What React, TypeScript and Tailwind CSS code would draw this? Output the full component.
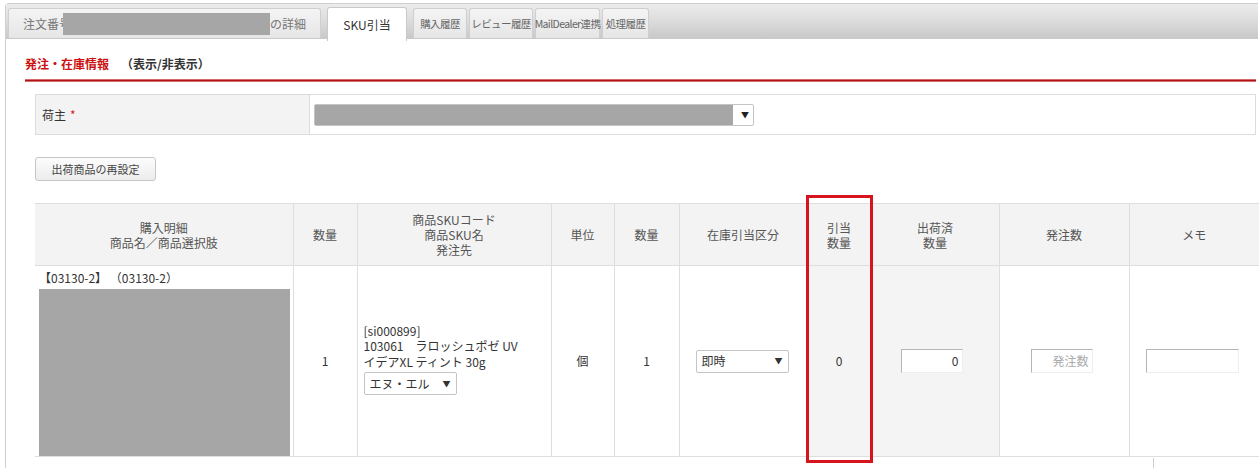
import React from "react";

const font = { fontFamily: '"Noto Sans CJK JP", "Noto Sans", sans-serif' };

function Tab({ children, active, w }: { children: React.ReactNode; active?: boolean; w: string }) {
  if (active) {
    return (
      <div className={`${w} h-[34px] -mb-[3px] flex items-center justify-center whitespace-nowrap rounded-t-[3px] border border-b-0 border-[#c9c9c9] bg-white text-[12px] text-[#333]`}>
        {children}
      </div>
    );
  }
  return (
    <div className={`${w} h-[30px] flex items-center justify-center whitespace-nowrap rounded-t-[3px] border border-b-0 border-[#cfcfcf] bg-gradient-to-b from-[#f4f4f4] to-[#e6e6e6] text-[10.5px] tracking-[-0.6px] text-[#666]`}>
      {children}
    </div>
  );
}

function Th({ children, w, last }: { children: React.ReactNode; w: string; last?: boolean }) {
  return (
    <th className={`${w} h-[62px] border-r ${last ? "border-r-0" : ""} border-b border-[#dedede] bg-[#f3f3f3] text-[12px] font-normal leading-[15px] text-[#555] text-center align-middle`}>
      {children}
    </th>
  );
}

export default function App() {
  return (
    <div className="relative w-[1260px] h-[468px] overflow-hidden bg-white text-[#333]" style={font}>
      <div className="ml-[5px] mt-[3px] w-[1253px] h-[470px] border-l border-t border-[#cfcfcf] rounded-tl-[4px]">
        {/* tab bar */}
        <div className="h-[35px] flex items-end gap-[6px] pl-[2px] bg-gradient-to-b from-[#ececec] via-[#dcdcdc] to-[#c9c9c9] border-b border-[#c9c9c9]">
          <Tab w="w-[313px]">
            <span className="flex items-center w-full pl-[14px] text-[12px] tracking-normal">
              <span className="text-[#777]">注文番号</span>
              <span className="-ml-[8px] inline-block w-[207px] h-[22px] bg-[#a6a6a6]" />
              <span className="text-[#777]">の詳細</span>
            </span>
          </Tab>
          <Tab active w="w-[80px]">SKU引当</Tab>
          <div className="flex items-end gap-[2px]">
            <Tab w="w-[54px]">購入履歴</Tab>
            <Tab w="w-[64px]">レビュー履歴</Tab>
            <Tab w="w-[65px]">MailDealer連携</Tab>
            <Tab w="w-[47px]">処理履歴</Tab>
          </div>
        </div>

        {/* content */}
        <div className="pl-[19px]">
          <div className="pt-[16px] h-[33px] flex items-center text-[12px] font-bold leading-[16px]">
            <span className="text-[#cc1111]">発注・在庫情報</span>
            <span className="ml-[12px] text-[#333]">（表示/非表示）</span>
          </div>
          <div className="mt-[7px] h-[3px] w-[1231px] bg-[#b0141a] border-y border-[#d46a6a]" />

          <div className="ml-[10px] mt-[12px] w-[1221px] h-[41px] flex border border-[#dcdcdc]">
            <div className="w-[274px] bg-[#f3f3f3] border-r border-[#dcdcdc] flex items-center pl-[6px] text-[12px]">
              荷主 <span className="ml-[4px] text-[#e02020]">*</span>
            </div>
            <div className="flex items-center pl-[4px]">
              <div className="w-[440px] h-[22px] flex items-center border border-[#c4c4c4] rounded-[2px] bg-white">
                <span className="w-[418px] h-full bg-[#a6a6a6]" />
                <span className="ml-[8px] text-[8px] text-[#222]">▼</span>
              </div>
            </div>
          </div>

          <button className="ml-[10px] mt-[22px] h-[24px] w-[121px] rounded-[3px] border border-[#c6c6c6] bg-gradient-to-b from-[#fcfcfc] to-[#ececec] text-[11px] text-[#444]">
            出荷商品の再設定
          </button>

          <table className="ml-[10px] mt-[22px] w-[1224px] table-fixed border-collapse border-t border-[#dedede]">
            <thead>
              <tr>
                <Th w="w-[258px]">購入明細<br />商品名／商品選択肢</Th>
                <Th w="w-[64px]">数量</Th>
                <Th w="w-[194px]">商品SKUコード<br />商品SKU名<br />発注先</Th>
                <Th w="w-[63px]">単位</Th>
                <Th w="w-[65px]">数量</Th>
                <Th w="w-[128px]">在庫引当区分</Th>
                <Th w="w-[64px]">引当<br />数量</Th>
                <Th w="w-[128px]">出荷済<br />数量</Th>
                <Th w="w-[130px]">発注数</Th>
                <Th w="w-[130px]" last>メモ</Th>
              </tr>
            </thead>
            <tbody className="text-[12px]">
              <tr className="h-[191px]">
                <td className="border-r border-b border-[#dedede] bg-white align-top px-[4px] pt-[4px]">
                  <div className="leading-[16px] text-[#333]">【03130-2】 （03130-2）</div>
                  <div className="mt-[3px] w-[251px] h-[167px] bg-[#a6a6a6]" />
                </td>
                <td className="border-r border-b border-[#dedede] bg-white text-center">1</td>
                <td className="border-r border-b border-[#dedede] bg-white px-[6px] leading-[15.5px]">
                  <div className="-mt-[4px]">[si000899]</div>
                  <div>103061　ラロッシュポゼ UV</div>
                  <div>イデアXL ティント 30g</div>
                  <div className="mt-[3px] w-[93px] h-[23px] flex items-center justify-between px-[5px] border border-[#c4c4c4] rounded-[2px]">
                    <span>エヌ・エル</span>
                    <span className="text-[8px]">▼</span>
                  </div>
                </td>
                <td className="border-r border-b border-[#dedede] bg-white text-center">個</td>
                <td className="border-r border-b border-[#dedede] bg-white text-center">1</td>
                <td className="border-r border-b border-[#dedede] bg-white pl-[16px]">
                  <div className="w-[93px] h-[23px] flex items-center justify-between px-[5px] border border-[#c4c4c4] rounded-[2px]">
                    <span>即時</span>
                    <span className="text-[8px]">▼</span>
                  </div>
                </td>
                <td className="border-r border-b border-[#dedede] bg-[#f4f4f4] text-center">0</td>
                <td className="border-r border-b border-[#dedede] bg-[#f4f4f4] pl-[29px]">
                  <div className="w-[62px] h-[24px] flex items-center justify-end pr-[3px] bg-white border border-[#b5b5b5] border-r-[#eeeeee] border-b-[#eeeeee]">0</div>
                </td>
                <td className="border-r border-b border-[#dedede] bg-white pl-[31px]">
                  <div className="w-[62px] h-[24px] flex items-center justify-end pr-[3px] bg-white border border-[#b5b5b5] border-r-[#eeeeee] border-b-[#eeeeee] text-[#aaa]">発注数</div>
                </td>
                <td className="border-b border-[#dedede] bg-white pl-[16px]">
                  <div className="w-[93px] h-[24px] bg-white border border-[#b5b5b5] border-r-[#eeeeee] border-b-[#eeeeee]" />
                </td>
              </tr>
            </tbody>
          </table>
        </div>
      </div>

      {/* annotation box */}
      <div className="absolute left-[806px] top-[195px] w-[67px] h-[268px] border-[3px] border-[#d7141e]" />
      <div className="absolute left-[1153px] top-[458px] w-px h-[10px] bg-[#cccccc]" />
    </div>
  );
}
